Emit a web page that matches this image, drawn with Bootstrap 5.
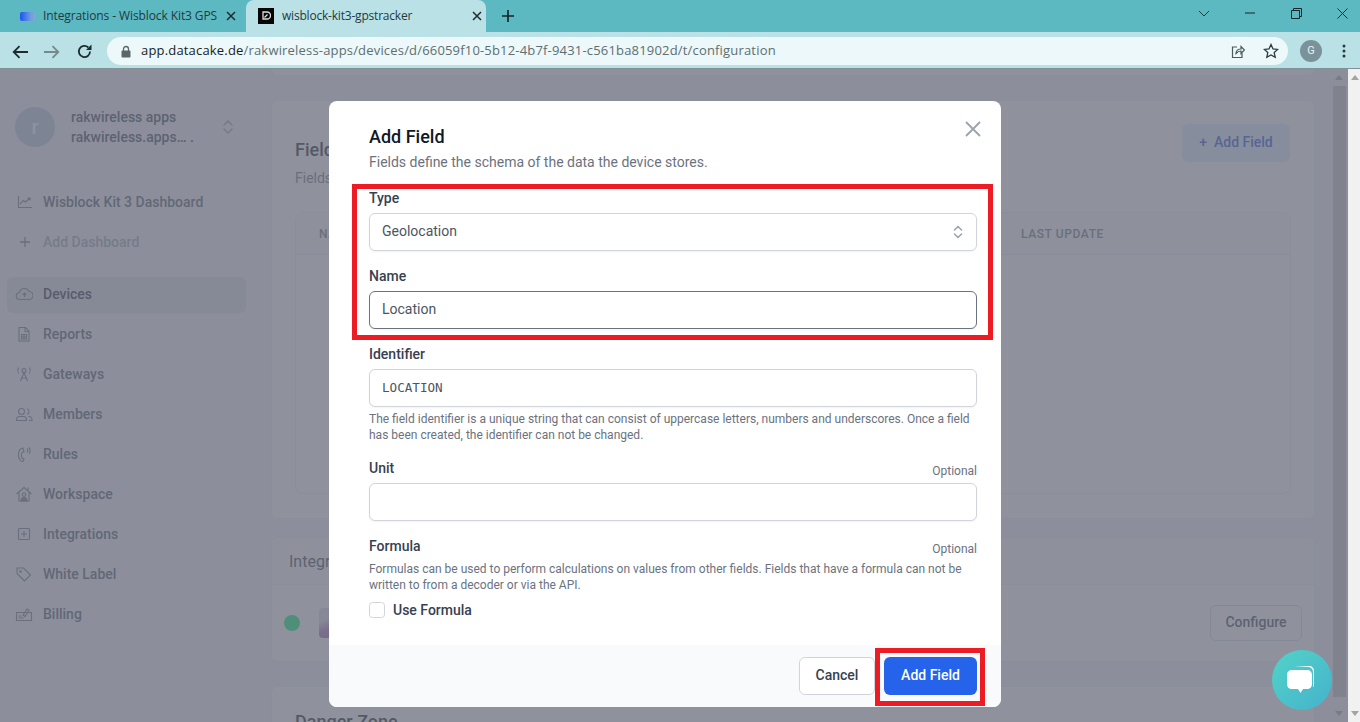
<!DOCTYPE html>
<html lang="en">
<head>
<meta charset="utf-8">
<title>wisblock-kit3-gpstracker</title>
<link href="https://cdn.jsdelivr.net/npm/bootstrap@5.3.0/dist/css/bootstrap.min.css" rel="stylesheet">
<style>
html,body{height:722px;overflow:hidden}
body{font-family:Roboto,"Liberation Sans",sans-serif;font-size:14px;color:#111827;background:#fff}
/* browser chrome */
.tabstrip{height:32px;background:#5cb8c1;color:#1f3a3f}
.tab-item{height:32px;font-size:12px;font-family:"Open Sans",Roboto,sans-serif;white-space:nowrap}
.tab-one{width:246px;padding-left:20px}
.tab-two{width:240px;padding-left:12px;background:#b9e1e6;border-radius:8px 8px 0 0}
.tab-name{overflow:hidden;width:176px;margin-left:8px;letter-spacing:-.1px}
.tab-two .tab-name{width:178px;margin-left:8px;letter-spacing:-.2px}
.tab-x{margin-left:7px;flex:none}
.tab-two .tab-x{margin-left:12px}
.fav-blue{width:15px;height:9px;border-radius:2px;background:linear-gradient(90deg,#1a55f2,#6f9be0 70%,#84a8d0);flex:none}
.fav-dark{width:16px;height:16px;background:#050505;flex:none;display:flex;align-items:center;justify-content:center}
.win-group{margin-right:-5px}
.win-ctl{width:46px;height:26px}
.toolbar{height:37px;background:#b9e1e6;border-bottom:1px solid #7f9296;padding-bottom:3px;padding-top:5px}
.tool-btn{width:32px;flex:none}
.omnibox{width:1181px;height:28px;margin-left:7px;border-radius:14px;background:#ecf8f9;padding-left:14px;padding-right:8px}
.lock-ico{flex:none}
.urlbar-text{font-family:"Open Sans",Roboto,sans-serif;font-size:13px;letter-spacing:.18px;color:#5f6e72;margin-left:10px;white-space:nowrap}
.urlbar-text b{font-weight:400;color:#172326}
.star-ico{margin-left:18px;margin-right:1px}
.menu-dots{margin-right:14px}
.profile-dot{width:22px;height:22px;border-radius:50%;background:#7a929a;color:#e6f2f4;font-size:11px;margin-left:12px}
/* page */
.page-area{height:653px;position:relative;overflow:hidden}
.side-col{width:255px;flex:none;background:#f1f2f5;color:#374151;padding:38px 9px 0 7px}
.org-block{padding-left:8px;height:40px;margin-bottom:38px}
.org-avatar{width:40px;height:40px;border-radius:50%;background:#b8c6d8;color:#fff;font-size:20px;font-weight:500;flex:none}
.org-text{margin-left:16px;font-weight:500;line-height:20px;white-space:nowrap}
.org-chev{margin-left:auto;margin-right:12px}
.nav-row{height:36px;margin-bottom:4px;padding:0 0 2px 8px;border-radius:6px;font-weight:500;color:#4b5563}
.nav-row svg{width:18px;height:18px;flex:none;margin-right:10px;color:#6b7280}
.nav-row.muted-row{color:#9ca3af}
.nav-row.on-row{background:#dcdfe5;color:#1f2937;margin-top:16px}
.main-col{flex:1;background:#f3f4f6;padding:0 18px 0 16px;min-width:0;overflow:hidden}
.stub-card{height:7px;background:#fff;border-radius:0 0 6px 6px;border:1px solid #eceef1;border-top:0;margin-bottom:24px}
.sheet{background:#fff;border:1px solid #eceef1;border-radius:6px}
.field-sheet{height:419px;padding:23px;margin-bottom:18px}
.sheet-title{font-size:18px;line-height:28px;font-weight:500;color:#111827;margin-top:12px}
.sheet-desc{line-height:20px;margin-top:4px;color:#6b7280}
.add-soft{height:38px;width:108px;margin-right:1px;background:#dbeafe;color:#1d4ed8;border:0;border-radius:6px;font-weight:500;font-size:14px;padding:0 0 2px}
.table-wrap{height:282px;margin-top:24px;border:1px solid #eceef1;border-radius:8px;overflow:hidden}
.table-wrap .table{table-layout:fixed;margin:0}
.table-wrap th{height:41px;padding:1px 0 0 23px;vertical-align:middle;font-size:12px;font-weight:500;letter-spacing:.6px;color:#6b7280;background:#f9fafb;border-color:#e5e7eb}
.integ-sheet{height:125px;margin-bottom:24px;overflow:hidden}
.integ-head{height:47px;background:#f9fafb;padding:2px 0 0 17px;font-size:16px;color:#374151;border-bottom:1px solid #eceef1}
.integ-row{height:75px;padding:0 12px 0 12px}
.green-dot{width:16px;height:16px;border-radius:50%;background:#00f070;flex:none}
.integ-logo{width:30px;height:30px;border-radius:4px;background:linear-gradient(160deg,#dcd4e8 35%,#a874b8 60%,#8f5aa8);margin-left:19px;flex:none}
.config-btn{height:36px;width:92px;border:1px solid #d1d5db;background:#fff;color:#374151;border-radius:6px;font-size:14px;font-weight:500;padding:0}
.danger-sheet{height:80px;padding:21px 23px}
.danger-sheet .sheet-title{margin-top:0}
.bar-inner{width:15px;flex:none;background:#f1f1f1;padding-top:6px}
.bar-outer{width:12px;flex:none;background:#f1f1f1;padding:6px 0 0 3px;z-index:3}
.up-tri{width:0;height:0;border:4px solid transparent;border-top:0;border-bottom:5px solid #a3a3a3}
.down-tri{width:0;height:0;border:4px solid transparent;border-bottom:0;border-top:5px solid #a3a3a3}
.bar-thumb{width:13px;height:611px;background:#c1c1c1;margin:6px 0 14px}
.bar-inner .up-tri,.bar-inner .down-tri{margin-left:2px}
.bar-outer .down-tri{margin-top:631px}
.dim-layer{position:absolute;inset:0 12px 0 0;background:rgba(105,110,124,.75);z-index:1}
/* dialog */
.dialog-box{position:absolute;left:329px;top:32px;width:672px;height:606px;z-index:2;border:0;border-radius:8px;overflow:hidden;background:#fff}
.dialog-body{padding:22px 24px 0 40px;height:544px;position:relative}
.dialog-title{font-size:18px;line-height:28px;font-weight:500;margin:0;color:#111827}
.dialog-sub{line-height:20px;color:#6b7280;margin:1px 0 16px}
.x-btn{position:absolute;right:19px;top:19px;width:18px;height:18px;padding:0;border:0;background:none;color:#9ca3af;display:flex}
.fld{margin-bottom:15px}
.fld-label{font-weight:500;line-height:20px;margin:0 0 5px;color:#374151;display:block}
.fld-top{height:20px;margin-bottom:5px}
.fld-top.tight{margin-bottom:0}
.fld-top .fld-label{margin:0}
.fld-opt{font-size:12px;color:#6b7280;line-height:20px;padding-top:3px}
.fld-control,.fld-control:focus{height:38px;font-size:14px;color:#4b5563;border:1px solid #d1d5db;border-radius:6px;padding:0 12px 2px;box-shadow:0 1px 2px rgba(0,0,0,.05)}
.fld-select{background-image:url("data:image/svg+xml,%3csvg xmlns='http://www.w3.org/2000/svg' viewBox='0 0 12 18'%3e%3cpath d='M2.500 7l3.500-3.500L9.500 7M2.500 11l3.500 3.500L9.500 11' fill='none' stroke='%239ca3af' stroke-width='1.600' stroke-linecap='round' stroke-linejoin='round'/%3e%3c/svg%3e");background-size:12px 18px;background-position:right 12px center}
.fld-focus,.fld-focus:focus{border-color:#6b7280}
.fld-mono{font-family:"DejaVu Sans Mono",monospace;font-size:12.6px}
.fld-help{font-size:12px;line-height:16px;color:#6b7280}
.fld-help.after{margin-top:4px}
.fld-help.before{margin-top:5px}
.use-row{margin-top:7px;height:20px}
.use-check{width:16px;height:16px;margin:0 8px 0 0;border:1px solid #d1d5db;border-radius:4px;flex:none}
.use-row label{font-weight:500;color:#374151}
.dialog-foot{height:62px;background:#f9fafb;padding:12px 24px 12px 0;border:0;gap:9px;display:flex;justify-content:flex-end;align-items:flex-start}
.btn-cancel{height:38px;width:76px;padding:0 0 2px;font-size:14px;font-weight:500;background:#fff;border:1px solid #d1d5db;border-radius:6px;color:#374151}
.btn-save{height:38px;width:93px;padding:0 0 2px;font-size:14px;font-weight:500;background:#2563eb;border:0;border-radius:6px;color:#fff}
.mark-box{position:absolute;border:5px solid #ed1c24;z-index:3;pointer-events:none}
.mark-one{left:352px;top:115px;width:641px;height:156px}
.mark-two{left:875px;top:579px;width:110px;height:58px}
.chat-fab{position:absolute;left:1272px;top:581px;width:60px;height:60px;border-radius:50%;background:linear-gradient(135deg,#52d3c8,#45b2cc);z-index:4}
</style>
</head>
<body>
<div class="tabstrip d-flex align-items-center">
  <div class="tab-item tab-one d-flex align-items-center">
    <span class="fav-blue"></span>
    <span class="tab-name">Integrations - Wisblock Kit3 GPS</span>
    <svg class="tab-x" width="10" height="10" viewBox="0 0 10 10"><path d="M1 1l8 8M9 1l-8 8" stroke="#1f2a2c" stroke-width="1.5"/></svg>
  </div>
  <div class="tab-item tab-two d-flex align-items-center">
    <span class="fav-dark"><svg width="10" height="10" viewBox="0 0 10 10"><path d="M2 1h4a3 3 0 0 1 0 7H2zM3.5 6.5l3-3" fill="none" stroke="#ddd" stroke-width="1.3"/></svg></span>
    <span class="tab-name">wisblock-kit3-gpstracker</span>
    <svg class="tab-x" width="10" height="10" viewBox="0 0 10 10"><path d="M1 1l8 8M9 1l-8 8" stroke="#1f2a2c" stroke-width="1.5"/></svg>
  </div>
  <svg class="ms-3" width="12" height="12" viewBox="0 0 12 12"><path d="M6 0v12M0 6h12" stroke="#15272a" stroke-width="1.7"/></svg>
  <div class="d-flex ms-auto align-self-start win-group">
    <div class="win-ctl d-flex align-items-center justify-content-center"><svg width="12" height="7" viewBox="0 0 12 7"><path d="M1 1l5 5 5-5" fill="none" stroke="#203a3e"/></svg></div>
    <div class="win-ctl d-flex align-items-center justify-content-center"><svg width="10" height="2" viewBox="0 0 10 2"><path d="M0 1h10" stroke="#15272a"/></svg></div>
    <div class="win-ctl d-flex align-items-center justify-content-center"><svg width="11" height="11" viewBox="0 0 11 11"><path d="M.5 2.5h8v8h-8zM2.5 2.5v-2h8v8h-2" fill="none" stroke="#15272a"/></svg></div>
    <div class="win-ctl d-flex align-items-center justify-content-center"><svg width="11" height="11" viewBox="0 0 11 11"><path d="M.5.5l10 10M10.500.5l-10 10" stroke="#15272a"/></svg></div>
  </div>
</div>
<div class="toolbar d-flex align-items-center ps-1">
  <div class="tool-btn text-center"><svg width="16" height="14" viewBox="0 0 16 14"><path d="M16 7H2M7.500 1.200 1.700 7l5.800 5.800" fill="none" stroke="#1c2b2e" stroke-width="1.800"/></svg></div>
  <div class="tool-btn text-center"><svg width="16" height="14" viewBox="0 0 16 14"><path d="M0 7h14M8.500 1.200 14.300 7l-5.800 5.800" fill="none" stroke="#77898d" stroke-width="1.800"/></svg></div>
  <div class="tool-btn text-center"><svg width="15" height="15" viewBox="0 0 15 15"><path d="M13 7.500a5.600 5.600 0 1 1-1.700-4" fill="none" stroke="#1c2b2e" stroke-width="1.800"/><path d="M14.500 0.500v5.500H9z" fill="#1c2b2e"/></svg></div>
  <div class="omnibox d-flex align-items-center">
    <svg width="10" height="13" viewBox="0 0 10 13" class="lock-ico"><path d="M2.500 6V4a2.500 2.500 0 0 1 5 0v2" fill="none" stroke="#5b6669" stroke-width="1.300"/><rect x="0.500" y="5.500" width="9" height="7" rx="1" fill="#5b6669"/></svg>
    <span class="urlbar-text"><b>app.datacake.de</b>/rakwireless-apps/devices/d/66059f10-5b12-4b7f-9431-c561ba81902d/t/configuration</span>
    <svg class="ms-auto" width="14" height="15" viewBox="0 0 14 15"><path d="M6 3H1.500v10.500H11V9" fill="none" stroke="#4a5a5e" stroke-width="1.200"/><path d="M5 9.500c0-3 2-4.500 5-4.500V2.500L13.500 6 10 9.500V7c-2 0-3.500.8-5 2.500z" fill="none" stroke="#4a5a5e" stroke-width="1.200"/></svg>
    <svg class="star-ico" width="16" height="16" viewBox="0 0 16 16"><path d="M8 1.500l2 4.400 4.700.5-3.500 3.200 1 4.700L8 11.900l-4.200 2.400 1-4.700L1.300 6.400 6 5.900z" fill="none" stroke="#2b3a3e" stroke-width="1.300"/></svg>
  </div>
  <div class="profile-dot d-flex align-items-center justify-content-center">G</div>
  <svg class="ms-auto menu-dots" width="4" height="14" viewBox="0 0 4 14"><circle cx="2" cy="2" r="1.500" fill="#2b3a3e"/><circle cx="2" cy="7" r="1.500" fill="#2b3a3e"/><circle cx="2" cy="12" r="1.500" fill="#2b3a3e"/></svg>
</div>

<div class="page-area d-flex">
  <aside class="side-col">
    <div class="org-block d-flex align-items-center">
      <div class="org-avatar d-flex align-items-center justify-content-center">r</div>
      <div class="org-text"><div>rakwireless apps</div><div>rakwireless.apps… .</div></div>
      <svg class="org-chev" width="12" height="18" viewBox="0 0 12 18"><path d="M2 7l4-4 4 4M2 11l4 4 4-4" fill="none" stroke="#9ca3af" stroke-width="1.600" stroke-linecap="round" stroke-linejoin="round"/></svg>
    </div>
    <div class="nav-row d-flex align-items-center"><svg viewBox="0 0 18 18" fill="none" stroke="currentColor" stroke-width="1.100"><path d="M3.500 3v11.500H17M5 11l3.500-3.500 2 1.500 4.500-4M12.500 5H15v2.500"/></svg><span class="nav-label">Wisblock Kit 3 Dashboard</span></div>
    <div class="nav-row muted-row d-flex align-items-center"><svg viewBox="0 0 18 18" fill="none" stroke="currentColor" stroke-width="1.300"><path d="M10 4v10M5 9h10"/></svg><span>Add Dashboard</span></div>
    <div class="nav-row on-row d-flex align-items-center"><svg viewBox="0 0 18 18" fill="none" stroke="currentColor" stroke-width="1.100"><path d="M5 14.500a3.500 3.500 0 0 1-.5-7A5 5 0 0 1 14 6.500a4 4 0 0 1 0 8zM9.500 12V8M7.500 10l2-2 2 2"/></svg><span>Devices</span></div>
    <div class="nav-row d-flex align-items-center"><svg viewBox="0 0 18 18" fill="none" stroke="currentColor" stroke-width="1.100"><path d="M4 2.500h6.500L14 6v10H4zM10 2.500V6.500h4M6.500 9.500h5v4.500h-5zM6.500 12h5M9 9.500V14"/></svg><span>Reports</span></div>
    <div class="nav-row d-flex align-items-center"><svg viewBox="0 0 18 18" fill="none" stroke="currentColor" stroke-width="1.100"><circle cx="9" cy="5.500" r="2"/><path d="M9 7.500 5.500 16M9 7.500l3.500 8.500M6.500 13h5M3.500 2.500c-1 2-1 4 0 6M14.500 2.500c1 2 1 4 0 6"/></svg><span>Gateways</span></div>
    <div class="nav-row d-flex align-items-center"><svg viewBox="0 0 18 18" fill="none" stroke="currentColor" stroke-width="1.100"><circle cx="6.500" cy="6.500" r="3"/><path d="M1.500 15.500v-1a3 3 0 0 1 3-3h4a3 3 0 0 1 3 3v1zM12 3.800a2.800 2.800 0 0 1 0 5.400M13.500 11.500a3 3 0 0 1 3.500 3v1h-3"/></svg><span>Members</span></div>
    <div class="nav-row d-flex align-items-center"><svg viewBox="0 0 18 18" fill="none" stroke="currentColor" stroke-width="1.100"><path d="M8 3C5 3.500 3.500 6 3.500 10s2 6.500 4.500 6.500l1-2.500-2-1c-.8-1.500-.8-4 0-5.500l2-.8zM12 3.500c1 1 1 3 0 4M14 2.500c1.500 1.500 1.500 4.500 0 6"/></svg><span>Rules</span></div>
    <div class="nav-row d-flex align-items-center"><svg viewBox="0 0 18 18" fill="none" stroke="currentColor" stroke-width="1.100"><path d="M1.500 9 9 2.500 16.500 9M4 7.500V16h10V7.500M13 2.500v2.500"/><circle cx="9" cy="9.500" r="1.800"/><path d="M6 16c0-2 1.200-3.500 3-3.500s3 1.500 3 3.500z" fill="currentColor"/></svg><span>Workspace</span></div>
    <div class="nav-row d-flex align-items-center"><svg viewBox="0 0 18 18" fill="none" stroke="currentColor" stroke-width="1.100"><rect x="3.500" y="3.500" width="11" height="11" rx="1"/><path d="M9 6v6M6 9h6"/></svg><span>Integrations</span></div>
    <div class="nav-row d-flex align-items-center"><svg viewBox="0 0 18 18" fill="none" stroke="currentColor" stroke-width="1.100"><path d="M2 3h6.500l7 7-6 6-7.500-7.500z"/><circle cx="5.500" cy="6.500" r=".8"/></svg><span>White Label</span></div>
    <div class="nav-row d-flex align-items-center"><svg viewBox="0 0 18 18" fill="none" stroke="currentColor" stroke-width="1.100"><path d="M1.500 7.500h15v8h-15zM3.500 11h3M3.500 13h5M8 10l4-6 2 1.500-4 6z"/></svg><span>Billing</span></div>
  </aside>
  <main class="main-col">
    <div class="stub-card"></div>
    <section class="sheet field-sheet">
      <div class="d-flex justify-content-between align-items-start">
        <div>
          <div class="sheet-title">Fields</div>
          <div class="sheet-desc">Fields define the schema of the data the device stores.</div>
        </div>
        <button class="add-soft" type="button">+&nbsp; Add Field</button>
      </div>
      <div class="table-wrap">
        <table class="table"><thead><tr><th style="width:702px">NAME</th><th>LAST UPDATE</th></tr></thead></table>
      </div>
    </section>
    <section class="sheet integ-sheet">
      <div class="integ-head d-flex align-items-center">Integrations</div>
      <div class="integ-row d-flex align-items-center">
        <span class="green-dot"></span>
        <span class="integ-logo"></span>
        <button class="config-btn ms-auto" type="button">Configure</button>
      </div>
    </section>
    <section class="sheet danger-sheet">
      <div class="sheet-title">Danger Zone</div>
    </section>
  </main>
  <div class="bar-inner"><div class="up-tri"></div><div class="bar-thumb"></div><div class="down-tri"></div></div>
  <div class="bar-outer"><div class="up-tri"></div><div class="down-tri"></div></div>
  <div class="dim-layer"></div>

  <div class="modal-content dialog-box">
    <div class="dialog-body">
      <h5 class="dialog-title">Add Field</h5>
      <p class="dialog-sub">Fields define the schema of the data the device stores.</p>
      <button class="x-btn" type="button" aria-label="Close"><svg width="18" height="18" viewBox="0 0 18 18"><path d="M2 2l14 14M16 2 2 16" stroke="currentColor" stroke-width="1.800"/></svg></button>
      <div class="fld">
        <label class="fld-label">Type</label>
        <select class="form-select fld-control fld-select"><option>Geolocation</option></select>
      </div>
      <div class="fld">
        <label class="fld-label">Name</label>
        <input class="form-control fld-control fld-focus" value="Location">
      </div>
      <div class="fld">
        <label class="fld-label">Identifier</label>
        <input class="form-control fld-control fld-mono" value="LOCATION">
        <div class="fld-help after">The field identifier is a unique string that can consist of uppercase letters, numbers and underscores. Once a field has been created, the identifier can not be changed.</div>
      </div>
      <div class="fld">
        <div class="fld-top d-flex justify-content-between"><label class="fld-label">Unit</label><span class="fld-opt">Optional</span></div>
        <input class="form-control fld-control">
      </div>
      <div>
        <div class="fld-top tight d-flex justify-content-between"><label class="fld-label">Formula</label><span class="fld-opt">Optional</span></div>
        <div class="fld-help before">Formulas can be used to perform calculations on values from other fields. Fields that have a formula can not be written to from a decoder or via the API.</div>
        <div class="use-row d-flex align-items-center">
          <input class="form-check-input use-check" type="checkbox" id="useFormula">
          <label for="useFormula">Use Formula</label>
        </div>
      </div>
    </div>
    <div class="dialog-foot">
      <button class="btn-cancel" type="button">Cancel</button>
      <button class="btn-save" type="button">Add Field</button>
    </div>
  </div>
  <div class="mark-box mark-one"></div>
  <div class="mark-box mark-two"></div>
  <div class="chat-fab d-flex align-items-center justify-content-center">
    <svg width="32" height="32" viewBox="0 0 32 32"><path d="M8 2h15c3 0 5 2 5 5v14c0 1-.5 2-1 2V8c0-2.500-1.500-4.500-4-5z" fill="#fff"/><path d="M6 6h15c3 0 5 2 5 5v9c0 3-2 5-5 5h-4l-2.500 4-2.500-4H6c-3 0-5-2-5-5v-9c0-3 2-5 5-5z" fill="#fff"/></svg>
  </div>
</div>
<script src="https://cdn.jsdelivr.net/npm/bootstrap@5.3.0/dist/js/bootstrap.bundle.min.js"></script>
</body>
</html>
